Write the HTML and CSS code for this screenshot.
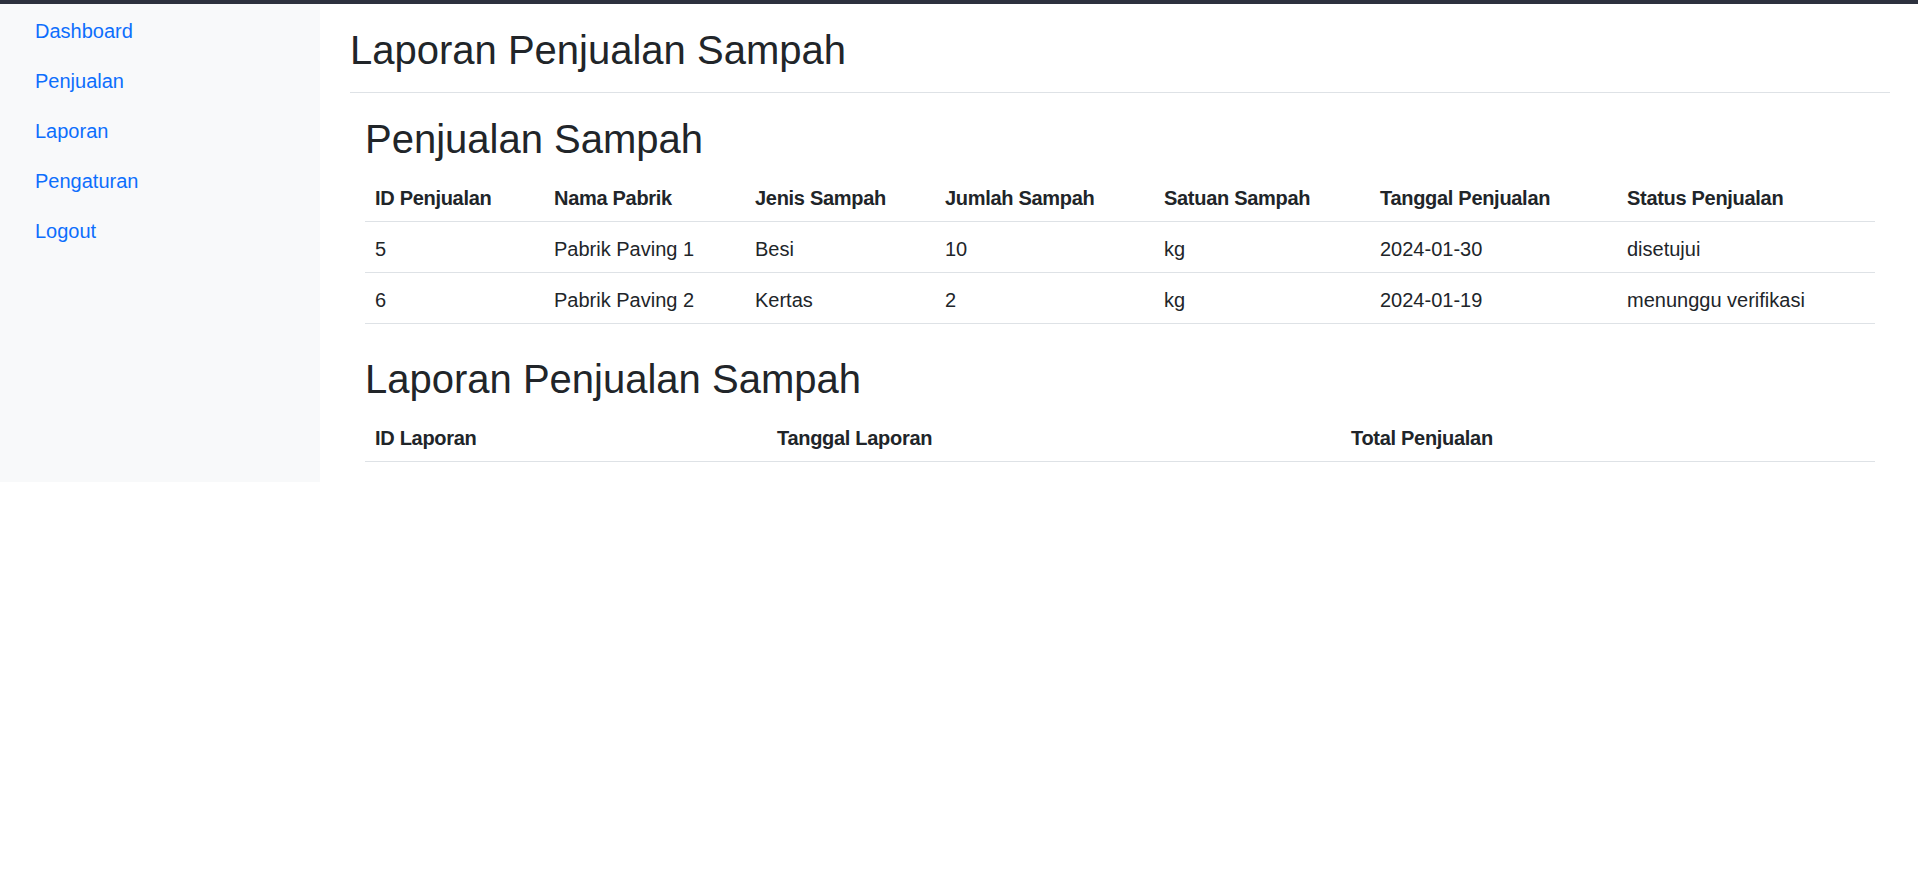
FILE: index.html
```html
<!DOCTYPE html>
<html lang="id">
<head>
<meta charset="utf-8">
<title>Laporan Penjualan Sampah</title>
<link rel="stylesheet" href="styles.css">
</head>
<body>
<div class="topbar"></div>
<div class="layout">
  <nav class="sidebar">
    <a class="nav-link" href="#">Dashboard</a>
    <a class="nav-link" href="#">Penjualan</a>
    <a class="nav-link" href="#">Laporan</a>
    <a class="nav-link" href="#">Pengaturan</a>
    <a class="nav-link" href="#">Logout</a>
  </nav>
  <main class="main">
    <div class="page-header">
      <h2 class="heading">Laporan Penjualan Sampah</h2>
    </div>
    <div class="content">
      <h2 class="heading">Penjualan Sampah</h2>
      <table class="table">
        <colgroup>
          <col class="c1"><col class="c2"><col class="c3"><col class="c4"><col class="c5"><col class="c6"><col class="c7">
        </colgroup>
        <thead>
          <tr>
            <th>ID Penjualan</th>
            <th>Nama Pabrik</th>
            <th>Jenis Sampah</th>
            <th>Jumlah Sampah</th>
            <th>Satuan Sampah</th>
            <th>Tanggal Penjualan</th>
            <th>Status Penjualan</th>
          </tr>
        </thead>
        <tbody>
          <tr>
            <td>5</td>
            <td>Pabrik Paving 1</td>
            <td>Besi</td>
            <td>10</td>
            <td>kg</td>
            <td>2024-01-30</td>
            <td>disetujui</td>
          </tr>
          <tr>
            <td>6</td>
            <td>Pabrik Paving 2</td>
            <td>Kertas</td>
            <td>2</td>
            <td>kg</td>
            <td>2024-01-19</td>
            <td>menunggu verifikasi</td>
          </tr>
        </tbody>
      </table>

      <h2 class="heading heading-second">Laporan Penjualan Sampah</h2>
      <table class="table">
        <colgroup>
          <col class="r1"><col class="r2"><col class="r3">
        </colgroup>
        <thead>
          <tr>
            <th>ID Laporan</th>
            <th>Tanggal Laporan</th>
            <th>Total Penjualan</th>
          </tr>
        </thead>
        <tbody></tbody>
      </table>
    </div>
  </main>
</div>
</body>
</html>
```

FILE: styles.css
```css
* {
  box-sizing: border-box;
}

html, body {
  margin: 0;
  padding: 0;
  background: #ffffff;
}

body {
  font-family: "Liberation Sans", Arial, sans-serif;
  font-size: 20px;
  line-height: 1.5;
  color: #212529;
}

.topbar {
  height: 4px;
  background: #2d313e;
}

.layout {
  display: flex;
  align-items: stretch;
}

.sidebar {
  width: 320px;
  flex: 0 0 320px;
  background: #f8f9fa;
  padding: 0 15px;
  display: flex;
  flex-direction: column;
}

.nav-link {
  display: block;
  padding: 12px 20px 8px;
  color: #0d6efd;
  text-decoration: none;
  line-height: 30px;
}

.main {
  flex: 1 1 auto;
  padding: 0 28px 0 30px;
}

.page-header {
  display: flex;
  align-items: center;
  padding: 20px 0 10px;
  margin-bottom: 20px;
  border-bottom: 1px solid #dee2e6;
}

.heading {
  margin: 0 0 8px;
  padding-top: 2px;
  font-size: 40px;
  line-height: 48px;
  font-weight: 400;
  color: #212529;
}

.content {
  padding: 0 15px;
}

.content .heading-second {
  margin-top: 29px;
}

.table {
  width: 100%;
  border-collapse: collapse;
  table-layout: fixed;
  margin-bottom: 20px;
}

.table th,
.table td {
  padding: 12px 10px 8px;
  text-align: left;
  vertical-align: top;
  border-bottom: 1px solid #dee2e6;
  line-height: 30px;
  white-space: nowrap;
}

.table th {
  font-weight: 700;
  letter-spacing: -0.3px;
}

.c1 { width: 179px; }
.c2 { width: 201px; }
.c3 { width: 190px; }
.c4 { width: 219px; }
.c5 { width: 216px; }
.c6 { width: 247px; }
.c7 { width: auto; }

.r1 { width: 402px; }
.r2 { width: 574px; }
.r3 { width: auto; }
```
